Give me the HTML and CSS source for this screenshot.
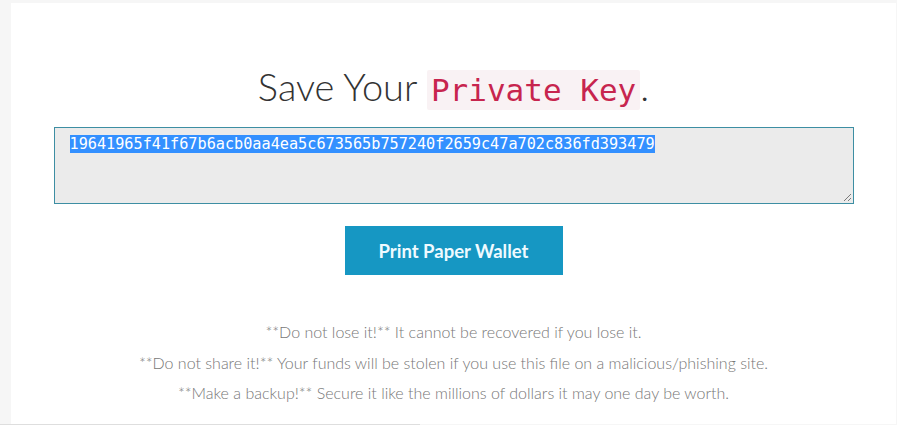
FILE: index.html
```html
<!DOCTYPE html>
<html lang="en">
<head>
<meta charset="utf-8">
<title>Save Your Private Key</title>
<link rel="stylesheet" href="styles.css">
</head>
<body>
<div class="page">
  <main class="panel">
    <h1 class="title">Save Your <code class="code">Private Key</code>.</h1>
    <div class="keybox" role="textbox" aria-readonly="true">
      <span class="sel">19641965f41f67b6acb0aa4ea5c673565b757240f2659c47a702c836fd393479</span>
      <svg class="grip" width="9" height="9" viewBox="0 0 9 9" aria-hidden="true">
        <path d="M1 8 L8 1 M5 8 L8 5" stroke="#7a7a7a" stroke-width="1" fill="none"/>
      </svg>
    </div>
    <button class="btn" type="button">Print Paper Wallet</button>
    <div class="notes">
      <p>**Do not lose it!** It cannot be recovered if you lose it.</p>
      <p>**Do not share it!** Your funds will be stolen if you use this file on a malicious/phishing site.</p>
      <p>**Make a backup!** Secure it like the millions of dollars it may one day be worth.</p>
    </div>
  </main>
  <div class="bottom-line"></div>
</div>
</body>
</html>
```
FILE: styles.css
```css
html, body {
  margin: 0;
  padding: 0;
}
body {
  background: #ffffff;
  font-family: Lato, "Open Sans", sans-serif;
  width: 897px;
  height: 427px;
  overflow: hidden;
}
.page {
  background: #f6f6f6;
  padding: 3px 1px 0 11px;
}
.panel {
  background: #ffffff;
  height: 421px;
  display: flex;
  flex-direction: column;
  align-items: center;
}
.title {
  margin: 60px 0 0 0;
  font-weight: 300;
  font-size: 38px;
  line-height: 46px;
  color: #333333;
  letter-spacing: 0;
}
.code {
  font-family: "DejaVu Sans Mono", "Liberation Mono", monospace;
  font-size: 31px;
  color: #c7254e;
  background: #f9f2f4;
  padding: 2px 4px;
  border-radius: 2px;
}
.keybox {
  position: relative;
  box-sizing: border-box;
  margin-top: 14px;
  width: 800px;
  height: 77px;
  background: #ebebeb;
  border: 1px solid #3d8ea3;
  padding: 8px 15px;
  font-family: "DejaVu Sans Mono", "Liberation Mono", monospace;
  font-size: 15.2px;
  line-height: 17px;
  color: #ffffff;
  text-align: left;
}
.sel {
  background: #3390ff;
  color: #ffffff;
}
.grip {
  position: absolute;
  right: 1px;
  bottom: 1px;
}
.btn {
  margin-top: 22px;
  width: 218px;
  height: 49px;
  border: none;
  background: #1697c3;
  color: #effaff;
  font-family: Lato, sans-serif;
  font-weight: 700;
  font-size: 18.5px;
  cursor: pointer;
}
.notes {
  margin-top: 42px;
  text-align: center;
  color: #777777;
  font-weight: 300;
  font-size: 16px;
  line-height: 30.5px;
}
.notes p {
  margin: 0;
}
.bottom-line {
  width: 420px;
  height: 1px;
  margin-left: -11px;
  background: #dedede;
}
```
